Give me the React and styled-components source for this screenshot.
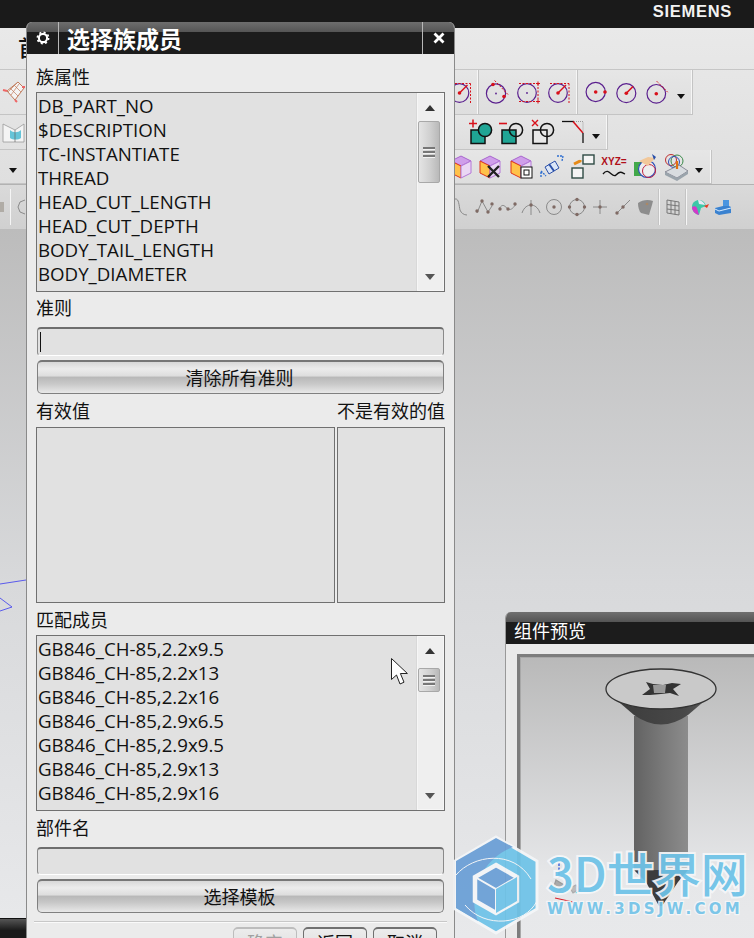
import React from "react";
import styled, { createGlobalStyle } from "styled-components";

const Global = createGlobalStyle`
  html, body { margin: 0; padding: 0; background: #ddd; }
  #root { width: 754px; height: 938px; }
`;
const FONT = `"Open Sans", "Noto Sans CJK SC", sans-serif`;
const CJK = `"Noto Sans CJK SC", "Noto Sans", sans-serif`;

const Desktop = styled.div`position: relative; width: 754px; height: 938px; overflow: hidden; display: flex; flex-direction: column; font-family: ${FONT}; color: #111;`;
const TopBar = styled.div`height: 28px; background: #1a1a1a; display: flex; justify-content: flex-end; align-items: center; padding-right: 22px; flex: none;`;
const Brand = styled.span`color: #f2f2f2; font: 700 16.5px "Liberation Sans", sans-serif; letter-spacing: 0.7px; margin-top: -6px;`;
const Ribbon = styled.div`flex: none; display: flex; flex-direction: column; background: linear-gradient(#e9e9e9, #dcdcdc);`;
const MenuRow = styled.div`height: 42px; box-sizing: border-box; padding: 2px 0 0 18px; font: 500 22px ${CJK}; border-bottom: 1px solid #c6c6c6; overflow: hidden;`;
const ToolRow = styled.div`height: ${p => p.$h}px; flex: none; display: flex; box-sizing: border-box; background: ${p => p.$bg || "none"}; border-top: ${p => p.$line ? "1px solid #b2b2b2" : "0"};`;
const LeftCluster = styled.div`width: 26px; flex: none; display: flex; align-items: center; justify-content: ${p => p.$j || "flex-end"}; overflow: hidden; border-bottom: ${p => p.$flat ? "0" : "1px solid #c4c4c4"}; box-sizing: border-box;`;
const LeftStub = styled.i`width: 4px; height: 10px; flex: none; background: #b0aca6; margin-right: 6px;`;
const LeftSep = styled.i`width: 1px; height: 36px; flex: none; background: #f5f5f5; margin-right: 6px;`;
const RightCluster = styled.div`margin-left: 424px; display: flex; height: 100%;`;
const Group = styled.div`width: ${p => p.$w}px; box-sizing: border-box; padding-left: ${p => p.$pl || 0}px; display: flex; align-items: center; gap: ${p => p.$gap ?? 7}px; border-right: 1px solid #c4c4c4; border-bottom: 1px solid #c4c4c4; box-shadow: inset -1px 0 #f6f6f6; background: linear-gradient(#e6e6e6, #dedede);`;
const PlainGroup = styled(Group)`border: 0; box-shadow: none; background: none;`;
const Slot = styled.div`width: ${p => p.$w || 24}px; height: 26px; flex: none; display: flex; align-items: center; justify-content: center; svg { overflow: visible; flex: none; }`;
const Drop = styled.i`width: 0; height: 0; flex: none; margin-left: ${p => p.$ml || 0}px; margin-top: 8px; border: 4.5px solid transparent; border-top: 5px solid #111; border-bottom: 0;`;
const Divider = styled.div`width: 1px; height: 36px; flex: none; background: #f5f5f5; box-shadow: -1px 0 #c4c4c4;`;

const Canvas = styled.div`flex: 1; display: flex; align-items: flex-end; background: linear-gradient(#bcbcbc 0, #d8d9db 50%, #e8e9eb 100%);`;
const TaskStub = styled.div`width: 26px; height: 19px; background: linear-gradient(#555, #1a1a1a 60%); border-top: 1px solid #111;`;

const Sketch = styled.svg`position: absolute; left: 0; top: 575px;`;

const Dialog = styled.div`position: absolute; left: 26px; top: 22px; width: 429px; height: 940px; box-sizing: border-box; border: 1px solid #8a8a8a; border-top: 0; border-radius: 6px 6px 0 0; background: #ebebeb; display: flex; flex-direction: column; overflow: hidden;`;
const Header = styled.div`height: 32px; flex: none; display: flex; align-items: stretch; background: linear-gradient(#6e6e6e 0, #565656 30%, #1c1c1c 31%, #1c1c1c 100%);`;
const HeadCell = styled.div`width: 31px; flex: none; display: flex; align-items: center; justify-content: center; border-right: ${p => p.$sep === "r" ? "1px solid #b8b8b8" : "0"}; border-left: ${p => p.$sep === "l" ? "1px solid #b8b8b8" : "0"};`;
const Title = styled.div`flex: 1; padding: 0 0 0 8px; color: #fff; font: 700 23px/33px ${CJK}; overflow: hidden;`;
const Body = styled.div`flex: 1; display: flex; flex-direction: column; padding: 0 9px;`;
const Label = styled.div`height: 24px; flex: none; font: 400 18px/22px ${CJK}; margin-top: ${p => p.$mt}px; margin-bottom: ${p => p.$mb}px;`;
const LabelRow = styled.div`display: flex; justify-content: space-between; height: 24px; flex: none; font: 400 18px/22px ${CJK}; margin-top: 5px; margin-bottom: 4px;`;
const ListBox = styled.div`height: ${p => p.$h}px; box-sizing: border-box; flex: none; display: flex; border: 1px solid #707070; background: #e1e1e1; overflow: hidden;`;
const Rows = styled.div`flex: 1; padding: 1px 0 0 1px; overflow: hidden;`;
const Row = styled.div`height: 24px; font-size: 18.7px; line-height: 24px; white-space: nowrap;`;
const ScrollTrack = styled.div`position: relative; width: 27px; flex: none; background: #efefef; border-left: 1px solid #d8d8d8; box-shadow: inset 0 0 0 1px #f6f6f6;`;
const ArrowUp = styled.i`position: absolute; left: 8px; top: 12px; width: 0; height: 0; border: 5.5px solid transparent; border-bottom: 6px solid #333; border-top: 0;`;
const ArrowDown = styled.i`position: absolute; left: 8px; bottom: 11px; width: 0; height: 0; border: 5.5px solid transparent; border-top: 6px solid #555; border-bottom: 0;`;
const Thumb = styled.div`position: absolute; left: 1px; top: ${p => p.$top}px; width: 22px; height: ${p => p.$h}px; box-sizing: border-box; border: 1px solid #a8a8a8; border-radius: 2px; background: linear-gradient(90deg, #e4e4e4, #d0d0d0 55%, #b9b9b9); display: flex; flex-direction: column; justify-content: center; align-items: center; gap: 2px;`;
const Grip = styled.i`display: block; width: 12px; height: 2px; background: #777; box-shadow: 0 1px #f2f2f2;`;
const Field = styled.div`height: ${p => p.$h}px; flex: none; box-sizing: border-box; margin: ${p => p.$mt || 0}px 1px 0; border: 1px solid #8a8a8a; border-top: 2px solid #6e6e6e; border-bottom: 1px solid #fff; border-radius: 4px; background: #e1e1e1; padding: 3px 2px;`;
const Caret = styled.div`width: 1px; height: 100%; background: #111;`;
const PushButton = styled.div`height: 34px; flex: none; box-sizing: border-box; margin: 4px 1px 0; padding-right: 2px; border: 1px solid #808080; border-top: 2px solid #777; border-radius: 5px; background: linear-gradient(#d8d8d8 0, #ececec 22%, #dedede 44%, #b9b9b9 50%, #c8c8c8 70%, #e8e8e8 100%); text-align: center; font: 400 18px/31px ${CJK};`;
const Panes = styled.div`display: flex; gap: 2px; height: 176px; flex: none;`;
const Pane = styled.div`width: ${p => p.$w}px; flex: none; box-sizing: border-box; border: 1px solid #707070; background: #e1e1e1;`;
const Rule = styled.div`height: 1px; flex: none; background: #c8c8c8; box-shadow: 0 1px #fafafa; margin: 8px -2px 5px;`;
const Footer = styled.div`display: flex; justify-content: flex-end; gap: 6px; padding-right: 8px; flex: none;`;
const FootButton = styled.div`width: 64px; height: 30px; box-sizing: border-box; border: 1px solid ${p => p.$off ? "#bdbdbd" : "#707070"}; border-top-width: 2px; border-radius: 5px; background: linear-gradient(#ececec, #dcdcdc); color: ${p => p.$off ? "#a0a0a0" : "#111"}; text-align: center; font: 400 18px/26px ${CJK};`;

const Cursor = styled.svg`position: absolute; left: 390px; top: 657px;`;

const Preview = styled.div`position: absolute; left: 505px; top: 612px; width: 260px; height: 340px; background: #eaeaea; border-left: 1px solid #999; border-radius: 6px 0 0 0; display: flex; flex-direction: column; overflow: hidden;`;
const PreviewHead = styled.div`height: 32px; flex: none; padding-left: 8px; box-sizing: border-box; color: #fff; font: 400 18px/36px ${CJK}; background: linear-gradient(#707070 0, #555 30%, #1c1c1c 31%);`;
const Viewport = styled.div`margin: 10px 0 0 11px; flex: 1; box-sizing: border-box; border: 3px solid #7d7d7d; border-right: 0; box-shadow: inset 0 0 0 1px #a8a8a8; background: linear-gradient(#b9b9b9 0, #e6e7e9 75%, #e8e9eb 100%);`;
const Mark = styled.div`position: absolute; left: 453px; top: 835px; width: 300px; height: 100px; pointer-events: none; opacity: .93;`;
const MarkHex = styled.svg`position: absolute; left: 0; top: 0;`;
const MarkTitle = styled.div`position: absolute; left: 94px; top: 8px; font: 500 47px/58px "Noto Sans CJK SC", "Liberation Sans", sans-serif; color: #6ec3e8; white-space: nowrap; paint-order: stroke; -webkit-text-stroke: 4px #f4f6f8; text-shadow: 0 0 2px #fff;`;
const MarkUrl = styled.div`position: absolute; left: 94px; top: 65px; font: 700 15px/18px "DejaVu Sans", sans-serif; color: #74c4e8; white-space: nowrap; letter-spacing: 3.3px; paint-order: stroke; -webkit-text-stroke: 2.5px #f4f6f8;`;

const Svg = ({ children, w = 24, h = 24 }) => <svg width={w} height={h} viewBox={`0 0 ${w} ${h}`}>{children}</svg>;
const PURPLE = "#5a1f8e";
const RED = "#d8101a";
const Dash = p => <path fill="none" stroke={RED} strokeWidth="1" strokeDasharray="2 1.5" {...p} />;
const Dot = ({ x, y, r = 1.8 }) => <circle cx={x} cy={y} r={r} fill={RED} />;
const Ring = ({ x, y, r = 9.3 }) => <circle cx={x} cy={y} r={r} fill="none" stroke={PURPLE} strokeWidth="1.2" />;

const Circ1 = () => <Svg><Ring x={12} y={13.5} r={9.6} /><Dash d="M10.6 .5L24 14.5" /><Dot x={9} y={4.5} /><Dot x={20} y={16.5} /><circle cx="12" cy="13.5" r=".9" fill={PURPLE} /></Svg>;
const Circ2 = () => <Svg><Ring x={12} y={13} /><Dash d="M4 3.5h19M23 3.5v18M4 21.5h19" /><path d="M21 3.5h4M23 1.5v4M21 21.5h4M23 19.5v4" stroke={RED} /><circle cx="12" cy="13" r=".9" fill={PURPLE} /></Svg>;
const Circ3 = ({ dx = 0 }) => <Svg><g transform={`translate(${dx} 0)`}><Ring x={12} y={13} /><Dash d="M4 3.5h19M23 3.5v20" /><Dot x={12} y={13} /><path d="M12 13l8-8" stroke={RED} strokeWidth="1.4" /></g></Svg>;
const Circ4 = () => <Svg><Ring x={11.7} y={12} r={9.6} /><Dot x={11.7} y={12} /><Dot x={21} y={12} /></Svg>;
const Circ5 = () => <Svg><Ring x={12.3} y={13.2} r={9.5} /><Dot x={12.3} y={13.2} /><path d="M12.3 13.2l6.7-6.7" stroke={RED} strokeWidth="1.6" /></Svg>;
const Circ6 = () => <Svg><Ring x={12.3} y={13.8} /><Dot x={12.3} y={13.8} /><Dash d="M12.7 1.2l11 11" /></Svg>;
const Bool = ({ mark, kind }) => (
  <Svg w={26} h={26}>
    <rect x="3" y="11" width="14" height="13.5" fill={kind === "x" ? "#e8e8e8" : "#1fa595"} stroke="#111" strokeWidth="1.5" />
    <circle cx="17" cy="11" r="6.6" fill={kind === "plus" ? "#1fa595" : "none"} stroke="#111" strokeWidth="1.5" />
    {mark === "+" && <path d="M1 4.5h8M5 .5v8" stroke={RED} strokeWidth="1.5" />}
    {mark === "-" && <path d="M0 4.5h8" stroke={RED} strokeWidth="1.6" />}
    {mark === "x" && <path d="M2 1l6 6M8 1l-6 6" stroke={RED} strokeWidth="1.4" />}
  </Svg>
);
const Chamfer = () => <Svg><path d="M0 1.5h12" fill="none" stroke="#111" strokeWidth="1.3" /><path d="M11 1.5l10 11.5" fill="none" stroke={RED} strokeWidth="1.5" /><path d="M21 13v10" stroke="#111" strokeWidth="1.3" /><path d="M12 1.5h9v11" fill="none" stroke="#999" strokeDasharray="1 1" /></Svg>;
const Cube = ({ children }) => (
  <Svg>
    <path d="M2 6l10-5 10 5-10 5z" fill="#cf9fea" stroke="#9a4fc6" strokeWidth=".8" />
    <path d="M2 6l10 5v12L2 18z" fill="#ffc24a" stroke="#e0341a" strokeWidth="1" />
    <path d="M22 6l-10 5v12l10-5z" fill="#ead7f4" stroke="#b477d8" strokeWidth="1" />
    {children}
  </Svg>
);
const Mirror = () => <Svg><path d="M5 12l10-6 4 7-10 6z" fill="#dbe6f7" stroke="#2a4fa8" /><path d="M9 9l5 7" stroke="#2a4fa8" strokeWidth="2" /><path d="M17 1l6 0-1 5M1 22l0-6 5 5" fill="none" stroke="#2f6fd0" strokeWidth="1.4" strokeDasharray="2 1" /></Svg>;
const Swap = () => <Svg><rect x="12" y="0" width="11" height="9" fill="#f4f4f4" stroke="#2e4a44" strokeWidth="1.4" /><rect x="1" y="13" width="11" height="10" fill="#f4f4f4" stroke="#2e4a44" strokeWidth="1.4" /><path d="M3 9l6-3v-1" stroke="#e58a16" strokeWidth="3" fill="none" /></Svg>;
const Xyz = () => <Svg><text x="12" y="10" textAnchor="middle" fontSize="10" fontWeight="700" fill="#b0101a" fontFamily="Liberation Sans">XYZ=</text><path d="M1 19c6-8 9 5 13 1s5-3 9-1" fill="none" stroke="#111" strokeWidth="1.3" /></Svg>;
const Cluster = () => <Svg><rect x="1" y="7" width="9" height="14" fill="#42a84a" /><circle cx="14" cy="14" r="8.5" fill="#eee" stroke="#3050b8" strokeWidth="1.2" /><circle cx="16" cy="16" r="6.5" fill="none" stroke="#c02040" /><path d="M6 6l9-4 7 1-7 8z" fill="#f2c89a" /><path d="M19 -1l4 3-2 3z" fill="#2a4fa8" /></Svg>;
const Assy = () => <Svg><circle cx="7" cy="5" r="5.5" fill="none" stroke="#c03030" /><circle cx="13" cy="6" r="6" fill="none" stroke="#3a8a4a" /><circle cx="10" cy="7" r="5.5" fill="none" stroke="#3050b8" /><path d="M1 17l14-7 9 6-11 7z" fill="#d8dce0" stroke="#667" strokeWidth=".7" /><path d="M1 17v3l12 6v-3zM13 23v3l11-7v-3z" fill="#9aa4ac" /><path d="M13 6v8" stroke="#e07010" strokeWidth="2.2" /></Svg>;

const G = "#7f6a64";
const Gc = "#8a8a8a";
const Gd = ({ x, y }) => <circle cx={x} cy={y} r="1.7" fill={G} />;
const R4 = {
  a: <Svg w={20} h={20}><path d="M3 2c4-1 4 7 5 11 1 3 4 5 7 5" fill="none" stroke={Gc} /></Svg>,
  b: <Svg w={20} h={20}><path d="M2 16l5-12 6 11 4-6" fill="none" stroke={Gc} /><Gd x="2" y="14" /><Gd x="7" y="4" /><Gd x="13" y="15" /><Gd x="17" y="7" /></Svg>,
  c: <Svg w={20} h={20}><path d="M1 12c4-7 6-2 9 0s6-2 8-5" fill="none" stroke={Gc} /><Gd x="2" y="12" /><Gd x="10" y="12" /><Gd x="17" y="7" /></Svg>,
  d: <Svg w={20} h={20}><path d="M10 3v15M1 16c2-6 6-8 9-8s7 2 9 8" fill="none" stroke={Gc} /><Gd x="10" y="8" /></Svg>,
  e: <Svg w={20} h={20}><circle cx="10" cy="10" r="7.5" fill="none" stroke={Gc} /><Gd x="10" y="10" /></Svg>,
  f: <Svg w={20} h={20}><circle cx="10" cy="10" r="7.5" fill="none" stroke={Gc} /><Gd x="10" y="2.5" /><Gd x="2.5" y="10" /><Gd x="17.5" y="10" /><Gd x="10" y="17.5" /></Svg>,
  g: <Svg w={20} h={20}><path d="M3 10h14M10 3v14" stroke={Gc} /><Gd x="10" y="10" /></Svg>,
  h: <Svg w={20} h={20}><path d="M3 17L17 3" stroke={Gc} /><Gd x="4" y="16" /><Gd x="10" y="10" /></Svg>,
  i: <Svg w={20} h={20}><path d="M2 6c4-3 10-4 15-2l-1 4-3 10-8-2C3 14 2 10 2 6z" fill="#8d8d8d" /><circle cx="11" cy="7" r="1.3" fill="#a86" /></Svg>,
  hex: <Svg w={8} h={16}><path d="M8 1L3 3 1 8l2 5 5 2" fill="none" stroke={Gc} /></Svg>,
  grid: <Svg w={20} h={20}><path d="M4 3l12 2v13L4 16zM8 3.7v13M12 4.4v13M4 7.5l12 1.5M4 12l12 1.5" fill="none" stroke="#777" /></Svg>,
  ball: <Svg w={20} h={20}><path d="M2 10c0-5 4-7 7-7s6 2 7 6l-5 2-2 7C5 17 2 14 2 10z" fill="#3cc8a8" /><path d="M2 10c2-1 4-1 5 1l2 7c-4-1-7-4-7-8z" fill="#d03ac8" /><path d="M8 3c3 0 6 2 7 5l-6-1z" fill="#e8e8f4" /><path d="M14 9l5-2-2 4z" fill="#e53a20" /></Svg>,
  box: <Svg w={20} h={20}><path d="M2 11l12-3 4 2v6l-12 2-4-2z" fill="#3a82d0" /><rect x="10" y="3" width="6" height="6" fill="#4a95e0" /><path d="M2 12l4 2 12-3" fill="none" stroke="#d9ecff" /></Svg>,
};

const Mesh = () => <Svg><path d="M5 11l11-9 6 6-9 12z" fill="#f4f4f4" stroke="#c07a5a" /><path d="M8 8l8 8M12 5l7 7M9 15l8-11M6 12l9-9" stroke="#c07a5a" strokeWidth=".7" /><path d="M1 10l4 1M13 20l2 2M20 7l3 0" stroke="#e66" strokeWidth="2" /></Svg>;
const Glass = () => <Svg><path d="M1 4l12 6 9-6v18H1z" fill="#f4f4f4" stroke="#999" strokeWidth=".8" /><path d="M8 10c3 3 8 3 11 0v8c-3 2-8 2-11 0z" fill="#66c4d8" /><path d="M13 10v12" stroke="#666" strokeWidth=".7" /></Svg>;

const attrs = ["DB_PART_NO", "$DESCRIPTION", "TC-INSTANTIATE", "THREAD", "HEAD_CUT_LENGTH", "HEAD_CUT_DEPTH", "BODY_TAIL_LENGTH", "BODY_DIAMETER"];
const members = ["GB846_CH-85,2.2x9.5", "GB846_CH-85,2.2x13", "GB846_CH-85,2.2x16", "GB846_CH-85,2.9x6.5", "GB846_CH-85,2.9x9.5", "GB846_CH-85,2.9x13", "GB846_CH-85,2.9x16"];

const Scroller = ({ top, h }) => (
  <ScrollTrack>
    <ArrowUp />
    <Thumb $top={top} $h={h}><Grip /><Grip /><Grip /></Thumb>
    <ArrowDown />
  </ScrollTrack>
);

export default function App() {
  return (
    <Desktop>
      <Global />
      <TopBar><Brand>SIEMENS</Brand></TopBar>
      <Ribbon>
        <MenuRow>首</MenuRow>
        <ToolRow $h={45}>
          <LeftCluster><Mesh /></LeftCluster>
          <RightCluster>
            <Group $w={29} $gap={0}><Slot><Circ3 dx={-2.5} /></Slot></Group>
            <Group $w={99} $pl={5}><Slot><Circ1 /></Slot><Slot><Circ2 /></Slot><Slot><Circ3 /></Slot></Group>
            <Group $w={115} $pl={6} $gap={6}><Slot><Circ4 /></Slot><Slot><Circ5 /></Slot><Slot><Circ6 /></Slot><Drop $ml={3} /></Group>
          </RightCluster>
        </ToolRow>
        <ToolRow $h={35}>
          <LeftCluster><Glass /></LeftCluster>
          <RightCluster>
            <Group $w={158}><Slot $w={12} /><Slot><Bool mark="+" kind="plus" /></Slot><Slot><Bool mark="-" /></Slot><Slot><Bool mark="x" kind="x" /></Slot><Slot><Chamfer /></Slot><Drop $ml={-1} /></Group>
          </RightCluster>
        </ToolRow>
        <ToolRow $h={34}>
          <LeftCluster $j="center"><Drop /></LeftCluster>
          <RightCluster>
            <Group $w={262}>
              <Slot $w={21}><Cube /></Slot>
              <Slot><Cube><path d="M10 11l11 11M21 11L10 22" stroke="#222" strokeWidth="2.4" /></Cube></Slot>
              <Slot><Cube><rect x="12" y="12" width="11" height="11" fill="#fff" stroke="#111" /><rect x="15" y="15" width="5" height="5" fill="none" stroke="#111" /></Cube></Slot>
              <Slot><Mirror /></Slot><Slot><Swap /></Slot><Slot><Xyz /></Slot><Slot><Cluster /></Slot><Slot><Assy /></Slot><Drop />
            </Group>
          </RightCluster>
        </ToolRow>
        <ToolRow $h={45} $bg="linear-gradient(#dadada, #d0d0d0)" $line>
          <LeftCluster $flat $j="flex-start"><LeftStub /><LeftSep />{R4.hex}</LeftCluster>
          <RightCluster>
            <PlainGroup $w={300} $pl={2} $gap={3}>
              <Slot $w={20}>{R4.a}</Slot><Slot $w={20}>{R4.b}</Slot><Slot $w={20}>{R4.c}</Slot><Slot $w={20}>{R4.d}</Slot><Slot $w={20}>{R4.e}</Slot><Slot $w={20}>{R4.f}</Slot><Slot $w={20}>{R4.g}</Slot><Slot $w={20}>{R4.h}</Slot><Slot $w={20}>{R4.i}</Slot>
              <Divider />
              <Slot $w={20}>{R4.grid}</Slot>
              <Divider />
              <Slot $w={20}>{R4.ball}</Slot><Slot $w={20}>{R4.box}</Slot>
            </PlainGroup>
          </RightCluster>
        </ToolRow>
      </Ribbon>
      <Canvas><TaskStub /></Canvas>

      <Sketch width="26" height="40" viewBox="0 0 26 40"><path d="M0 9l26-4M0 23l12 9-12 4" fill="none" stroke="#3a3af0" strokeWidth=".8" /></Sketch>

      <Preview>
        <PreviewHead>组件预览</PreviewHead>
        <Viewport>
          <svg width="234" height="284" viewBox="520 657 234 284">
            <defs>
              <linearGradient id="shaft" x1="0" x2="1" y1="0" y2="0">
                <stop offset="0" stopColor="#626262" /><stop offset=".55" stopColor="#7a7a7a" /><stop offset="1" stopColor="#8c8c8c" />
              </linearGradient>
              <linearGradient id="cone" x1="0" x2="1" y1="0" y2="0">
                <stop offset="0" stopColor="#3a3a3a" /><stop offset=".7" stopColor="#484848" /><stop offset="1" stopColor="#5c5c5c" />
              </linearGradient>
            </defs>
            <path d="M634 716h54v154h-54z" fill="url(#shaft)" />
            <path d="M634 870h54l-10 12-16 24-3 0-13-24z" fill="#3c3c3c" />
            <path d="M606 691L634 715Q661 734 688 715L716 691z" fill="url(#cone)" />
            <ellipse cx="661" cy="689" rx="55" ry="20" fill="#c9c9c9" stroke="#333" strokeWidth="1.3" />
            <path d="M646 682L653 684 663 685 672 683 681 684 673 689 679 696 670 693 661 694 650 695 642 695 650 689z" fill="#333" />
            <path d="M653 685h13l-1 8h-11z" fill="#9a9a9a" />
            <g fill="none" strokeWidth="1.2">
              <path d="M559 863v15" stroke="#1a45d8" strokeDasharray="3 1.5" />
              <path d="M555 898l18 4" stroke="#d8202a" />
              <path d="M576 893l5-4" stroke="#2aa890" />
              <path d="M556 880l8 5-4 5-6-4z" fill="#aaa" stroke="#999" />
              <path d="M570 888l6-3 3 4-6 4z" fill="#bbb" stroke="#aaa" />
            </g>
          </svg>
        </Viewport>
      </Preview>

      <Dialog>
        <Header>
          <HeadCell $sep="r">
            <svg width="14" height="14" viewBox="0 0 15 15"><circle cx="7.5" cy="7.5" r="4.4" fill="none" stroke="#fff" strokeWidth="2.2" /><circle cx="7.5" cy="7.5" r="6" fill="none" stroke="#fff" strokeWidth="1.8" strokeDasharray="2.2 2.5" /></svg>
          </HeadCell>
          <Title>选择族成员</Title>
          <HeadCell $sep="l">
            <svg width="12" height="12" viewBox="0 0 12 12"><path d="M1.5 1.5l9 9M10.5 1.5l-9 9" stroke="#fff" strokeWidth="2.8" /></svg>
          </HeadCell>
        </Header>
        <Body>
          <Label $mt={11} $mb={3}>族属性</Label>
          <ListBox $h={200}>
            <Rows>{attrs.map(a => <Row key={a}>{a}</Row>)}</Rows>
            <Scroller top={28} h={62} />
          </ListBox>
          <Label $mt={4} $mb={7}>准则</Label>
          <Field $h={29}><Caret /></Field>
          <PushButton>清除所有准则</PushButton>
          <LabelRow><span>有效值</span><span>不是有效的值</span></LabelRow>
          <Panes><Pane $w={299} /><Pane $w={108} /></Panes>
          <Label $mt={5} $mb={3}>匹配成员</Label>
          <ListBox $h={176}>
            <Rows>{members.map(m => <Row key={m}>{m}</Row>)}</Rows>
            <Scroller top={32} h={24} />
          </ListBox>
          <Label $mt={5} $mb={7}>部件名</Label>
          <Field $h={28} />
          <PushButton>选择模板</PushButton>
          <Rule />
          <Footer>
            <FootButton $off>确定</FootButton>
            <FootButton>返回</FootButton>
            <FootButton>取消</FootButton>
          </Footer>
        </Body>
      </Dialog>

      <Cursor width="20" height="30" viewBox="0 0 20 30"><path d="M1.5 1.5v21l5-4.5 3.5 9 4-1.8-3.6-8.7h7z" fill="#fff" stroke="#222" strokeWidth="1" /></Cursor>

      <Mark>
        <MarkHex width="92" height="100" viewBox="0 0 92 100">
          <path d="M43 2l41 24v48L43 98 2 74V26z" fill="#6ec3e8" stroke="#f4f6f8" strokeWidth="3" />
          <path d="M43 3L3 26v47l22 13C14 60 28 24 60 12z" fill="#6a9fd6" />
          <path d="M3 40C20 20 60 14 78 44M12 70c20 24 60 20 72-4" fill="none" stroke="#f4f6f8" strokeWidth="1" />
          <path d="M43 30l21 12v24L43 78 22 66V42z" fill="#6a9fd6" stroke="#f4f6f8" strokeWidth="4.5" />
          <path d="M22 42l21 12 21-12M43 54v24" fill="none" stroke="#f4f6f8" strokeWidth="2" />
          <path d="M43 54l21-12v24L43 78z" fill="#6ec3e8" />
        </MarkHex>
        <MarkTitle>3D世界网</MarkTitle>
        <MarkUrl>WWW.3DSJW.COM</MarkUrl>
      </Mark>
    </Desktop>
  );
}
